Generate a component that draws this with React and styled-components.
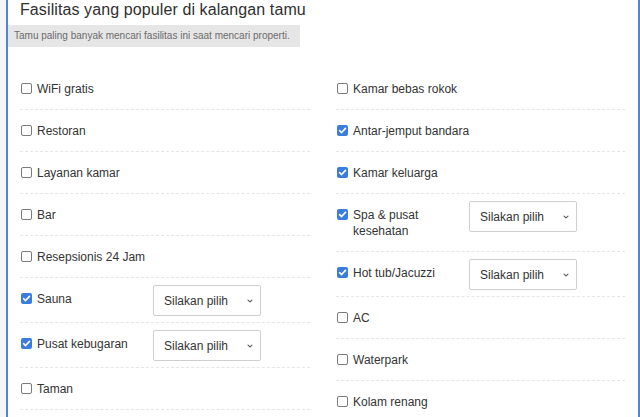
import styled, { createGlobalStyle } from "styled-components";

const GlobalStyle = createGlobalStyle`
  html, body {
    margin: 0;
    padding: 0;
    background: #f6f6f6;
    font-family: "Helvetica Neue", "Liberation Sans", Arial, sans-serif;
  }
`;

const leftColumn = [
  { name: "WiFi gratis" },
  { name: "Restoran" },
  { name: "Layanan kamar" },
  { name: "Bar" },
  { name: "Resepsionis 24 Jam" },
  { name: "Sauna", checked: true, select: true },
  { name: "Pusat kebugaran", checked: true, select: true },
  { name: "Taman" },
];

const rightColumn = [
  { name: "Kamar bebas rokok" },
  { name: "Antar-jemput bandara", checked: true },
  { name: "Kamar keluarga", checked: true },
  { name: "Spa & pusat kesehatan", checked: true, select: true },
  { name: "Hot tub/Jacuzzi", checked: true, select: true },
  { name: "AC" },
  { name: "Waterpark" },
  { name: "Kolam renang" },
];

const FacilityRow = ({ item }) => (
  <Row>
    <Label $narrow={item.select}>
      <Box $checked={item.checked}>
        {item.checked && (
          <svg width="9" height="9" viewBox="0 0 10 10">
            <path d="M1.8 5.2 L4 7.3 L8.3 2.6" fill="none" stroke="#fff" strokeWidth="1.8" strokeLinecap="round" strokeLinejoin="round" />
          </svg>
        )}
      </Box>
      <LabelText>{item.name}</LabelText>
    </Label>
    {item.select && (
      <Select>
        <span>Silakan pilih</span>
        <svg width="8" height="8" viewBox="0 0 10 10">
          <path d="M2.5 3.8 L5 6.2 L7.5 3.8" fill="none" stroke="#555" strokeWidth="1.3" strokeLinecap="round" strokeLinejoin="round" />
        </svg>
      </Select>
    )}
  </Row>
);

const App = () => {
  return (
    <>
      <GlobalStyle />
      <Card>
        <Title>Fasilitas yang populer di kalangan tamu</Title>
        <Hint>Tamu paling banyak mencari fasilitas ini saat mencari properti.</Hint>
        <Columns>
          <Column>
            {leftColumn.map((item) => (
              <FacilityRow key={item.name} item={item} />
            ))}
          </Column>
          <Column>
            {rightColumn.map((item) => (
              <FacilityRow key={item.name} item={item} />
            ))}
          </Column>
        </Columns>
      </Card>
    </>
  );
};

const Card = styled.div`
  margin-left: 6px;
  width: 630px;
  height: 417px;
  overflow: hidden;
  background: #ffffff;
  border-left: 2px solid #4f86d6;
  border-right: 2px solid #4f86d6;
  box-sizing: content-box;
`;

const Title = styled.div`
  padding: 0 12px;
  height: 21px;
  line-height: 19px;
  font-size: 16px;
  color: #2f2f2f;
  letter-spacing: 0.1px;
`;

const Hint = styled.div`
  margin-top: 4px;
  width: 292px;
  height: 22px;
  line-height: 22px;
  padding-left: 6px;
  box-sizing: border-box;
  background: #e6e6e6;
  font-size: 10px;
  color: #6b6b6b;
`;

const Columns = styled.div`
  display: grid;
  grid-template-columns: 290px 289px;
  column-gap: 26px;
  padding: 21px 12px 0 12px;
`;

const Column = styled.div`
  display: flex;
  flex-direction: column;
`;

const Row = styled.div`
  display: flex;
  align-items: flex-start;
  padding: 13px 0 12px 1px;
  border-bottom: 1px dashed #e6e6e6;
`;

const Label = styled.div`
  display: flex;
  align-items: flex-start;
  gap: 5px;
  flex: ${(p) => (p.$narrow ? "0 0 132px" : "1")};
  padding-right: ${(p) => (p.$narrow ? "14px" : "0")};
  box-sizing: border-box;
`;

const Box = styled.span`
  flex: 0 0 auto;
  width: 11px;
  height: 11px;
  margin-top: 2px;
  border-radius: 2px;
  box-sizing: border-box;
  display: flex;
  align-items: center;
  justify-content: center;
  background: ${(p) => (p.$checked ? "#3b7ddd" : "#ffffff")};
  border: ${(p) => (p.$checked ? "none" : "1.3px solid #7a7a7a")};
`;

const LabelText = styled.span`
  font-size: 12px;
  line-height: 16px;
  color: #333333;
`;

const Select = styled.div`
  margin: -6px 0 -6px 0;
  width: 108px;
  height: 31px;
  box-sizing: border-box;
  border: 1px solid #cfcfcf;
  border-radius: 2px;
  background: #ffffff;
  display: flex;
  align-items: center;
  justify-content: space-between;
  padding: 0 6px 0 10px;
  font-size: 12px;
  color: #333333;
`;

export default App;
